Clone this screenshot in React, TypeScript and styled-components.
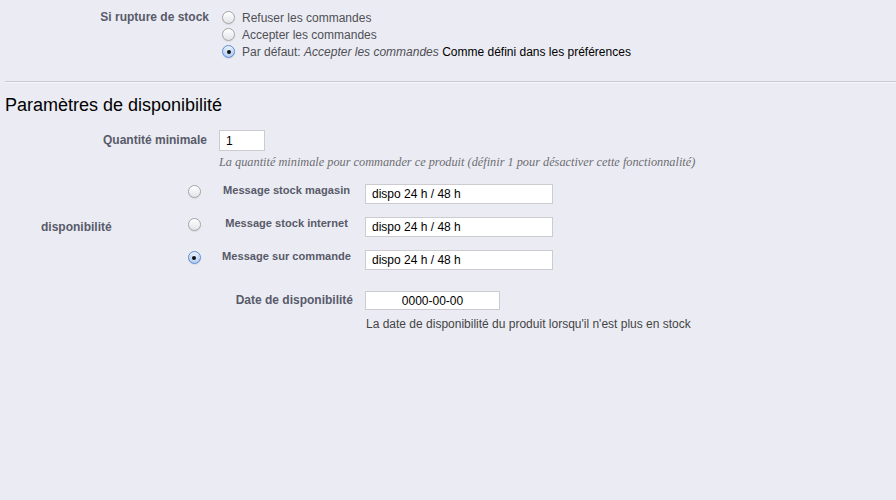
import React from "react";
import styled, { createGlobalStyle } from "styled-components";

const GlobalStyle = createGlobalStyle`
  html, body {
    margin: 0;
    padding: 0;
    background: #ebecf3;
  }
  body {
    font-family: "Liberation Sans", Arial, sans-serif;
    height: 500px;
    overflow: hidden;
  }
  * { box-sizing: border-box; }
`;

const Page = styled.div`
  padding-top: 9px;
`;

const FormRow = styled.div<{ $labelWidth: number; $gap: number }>`
  display: grid;
  grid-template-columns: ${(p) => p.$labelWidth}px 1fr;
  column-gap: ${(p) => p.$gap}px;
  align-items: start;
`;

const FieldLabel = styled.label<{ $lineHeight?: number }>`
  font-size: 12px;
  font-weight: bold;
  color: #585a69;
  text-align: right;
  line-height: ${(p) => p.$lineHeight ?? 17}px;
  white-space: nowrap;
`;

const Options = styled.div`
  display: flex;
  flex-direction: column;
`;

const Option = styled.div`
  display: flex;
  align-items: center;
  height: 17px;
  gap: 7px;
  font-size: 12px;
  color: #4f4f55;
  white-space: nowrap;
`;

const Radio = styled.span<{ $checked?: boolean }>`
  flex: none;
  position: relative;
  width: 13px;
  height: 13px;
  border-radius: 50%;
  border: 1px solid ${(p) => (p.$checked ? "#5b8bd0" : "#a3a3a8")};
  background: ${(p) =>
    p.$checked
      ? "radial-gradient(circle at 50% 35%, #e8f1fd 0%, #b5d0f2 70%, #8fb6ea 100%)"
      : "linear-gradient(#ffffff, #e4e4e8)"};
  box-shadow: inset 0 1px 1px rgba(255, 255, 255, 0.8), 0 1px 1px rgba(0, 0, 0, 0.08);
  &::after {
    content: "";
    display: ${(p) => (p.$checked ? "block" : "none")};
    position: absolute;
    left: 50%;
    top: 50%;
    width: 4px;
    height: 4px;
    margin: -2px 0 0 -2px;
    border-radius: 50%;
    background: #111;
  }
`;

const Italic = styled.em`
  font-style: italic;
`;

const Strong = styled.span`
  color: #000;
`;

const Divider = styled.hr`
  margin: 21px 0 0 5px;
  border: none;
  border-top: 1px solid #c9c9cf;
  border-bottom: 1px solid #f6f6fa;
  height: 0;
`;

const SectionTitle = styled.h2`
  margin: 12px 0 0 5px;
  font-size: 18px;
  font-weight: normal;
  line-height: 20px;
  color: #000;
`;

const TextInput = styled.input<{ $width: number; $height?: number; $center?: boolean }>`
  width: ${(p) => p.$width}px;
  height: ${(p) => p.$height ?? 20}px;
  border: 1px solid #cbcbd0;
  background: #fff;
  padding: 0 6px;
  font-family: "Liberation Sans", Arial, sans-serif;
  font-size: 12px;
  color: #000;
  text-align: ${(p) => (p.$center ? "center" : "left")};
  outline: none;
  display: block;
`;

const QtyRow = styled(FormRow)`
  margin-top: 15px;
  align-items: center;
`;

const SerifHint = styled.p`
  margin: 3px 0 0 219px;
  font-family: "Liberation Serif", Georgia, serif;
  font-style: italic;
  font-size: 12.3px;
  line-height: 16px;
  color: #6d6d72;
  white-space: nowrap;
`;

const AvailGrid = styled.div`
  margin-top: 14px;
  display: grid;
  grid-template-columns: 180px 28px 157px 188px;
  grid-template-rows: 33px 33px 33px auto auto;
`;

const GroupLabel = styled(FieldLabel)`
  grid-column: 1;
  grid-row: 1 / 4;
  align-self: center;
  text-align: left;
  padding-left: 41px;
  padding-bottom: 12px;
`;

const RadioCell = styled.div`
  grid-column: 2;
  display: flex;
  justify-content: center;
  padding-top: 1px;
`;

const MessageLabel = styled.div`
  grid-column: 3;
  font-size: 11.1px;
  font-weight: bold;
  color: #585a69;
  text-align: center;
  line-height: 12px;
  white-space: nowrap;
`;

const InputCell = styled.div`
  grid-column: 4;
`;

const DateLabel = styled(FieldLabel)`
  grid-column: 2 / 4;
  grid-row: 4;
  margin-top: 8px;
  padding-right: 12px;
`;

const DateCell = styled.div`
  grid-column: 4;
  grid-row: 4;
  margin-top: 8px;
`;

const SansHint = styled.div`
  grid-column: 4;
  grid-row: 5;
  margin-top: 6px;
  padding-left: 1px;
  font-size: 12px;
  line-height: 16px;
  color: #444;
  white-space: nowrap;
`;

const messages = [
  { label: "Message stock magasin", checked: false },
  { label: "Message stock internet", checked: false },
  { label: "Message sur commande", checked: true },
];

export default function App() {
  return (
    <Page>
      <GlobalStyle />
      <FormRow $labelWidth={209} $gap={13}>
        <FieldLabel>Si rupture de stock</FieldLabel>
        <Options>
          <Option>
            <Radio />
            Refuser les commandes
          </Option>
          <Option>
            <Radio />
            Accepter les commandes
          </Option>
          <Option>
            <Radio $checked />
            <span>
              Par défaut: <Italic>Accepter les commandes</Italic>{" "}
              <Strong>Comme défini dans les préférences</Strong>
            </span>
          </Option>
        </Options>
      </FormRow>

      <Divider />

      <SectionTitle>Paramètres de disponibilité</SectionTitle>

      <QtyRow $labelWidth={207} $gap={12}>
        <FieldLabel>Quantité minimale</FieldLabel>
        <TextInput $width={46} $height={21} defaultValue="1" />
      </QtyRow>
      <SerifHint>
        La quantité minimale pour commander ce produit (définir 1 pour désactiver cette
        fonctionnalité)
      </SerifHint>

      <AvailGrid>
        <GroupLabel>disponibilité</GroupLabel>
        {messages.map((m, i) => (
          <React.Fragment key={m.label}>
            <RadioCell style={{ gridRow: i + 1 }}>
              <Radio $checked={m.checked} />
            </RadioCell>
            <MessageLabel style={{ gridRow: i + 1 }}>{m.label}</MessageLabel>
            <InputCell style={{ gridRow: i + 1 }}>
              <TextInput $width={188} defaultValue="dispo 24 h / 48 h" />
            </InputCell>
          </React.Fragment>
        ))}
        <DateLabel $lineHeight={19}>Date de disponibilité</DateLabel>
        <DateCell>
          <TextInput $width={135} $height={19} $center defaultValue="0000-00-00" />
        </DateCell>
        <SansHint>La date de disponibilité du produit lorsqu'il n'est plus en stock</SansHint>
      </AvailGrid>
    </Page>
  );
}
